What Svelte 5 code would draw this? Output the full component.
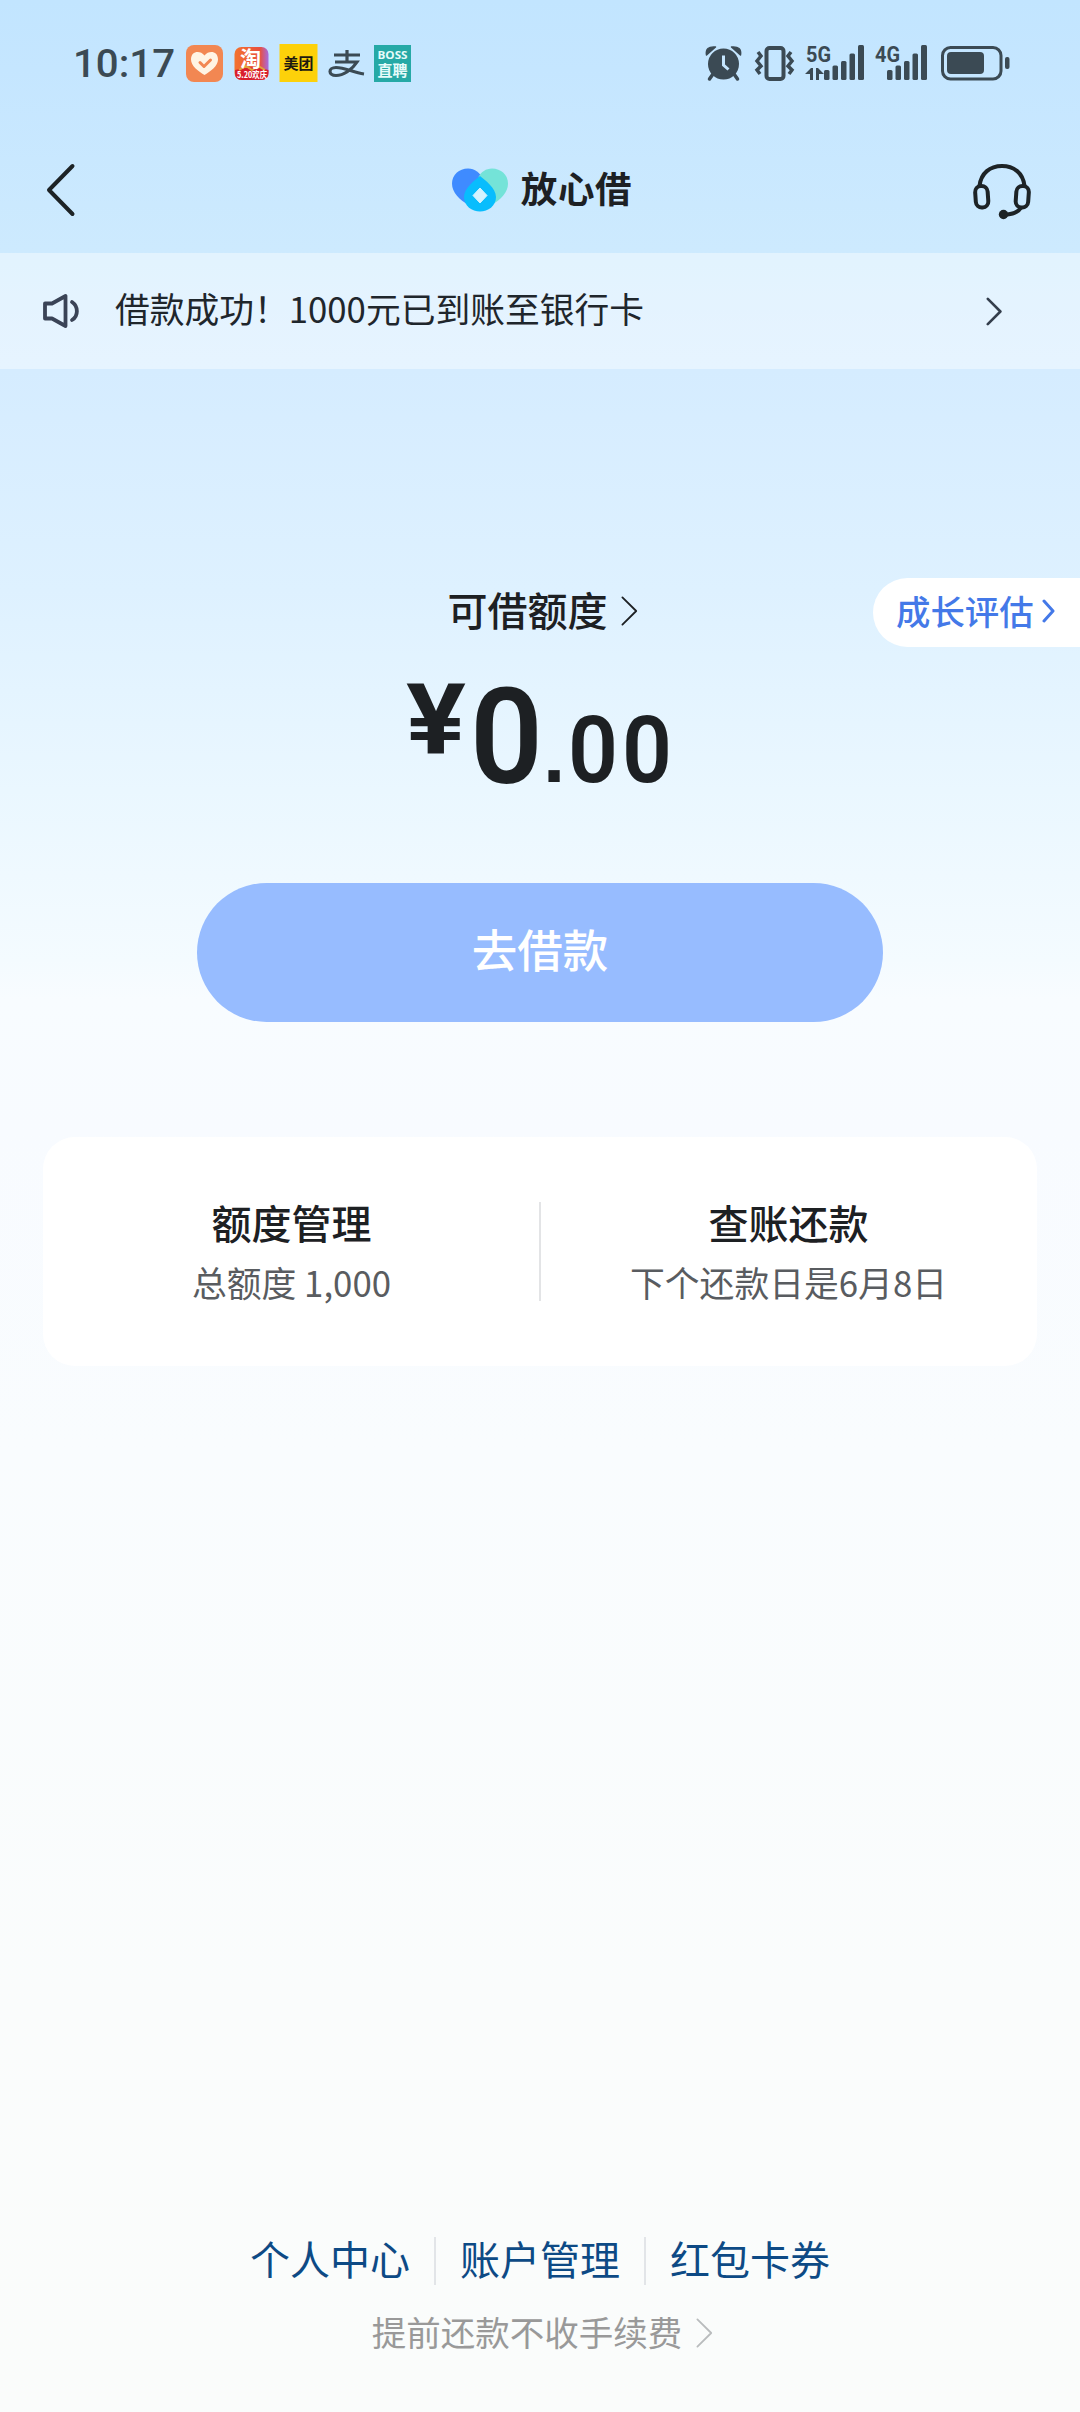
<script lang="ts">
  const links = ['个人中心', '账户管理', '红包卡券'];

  const cards = [
    { title: '额度管理', desc: '总额度 1,000' },
    { title: '查账还款', desc: '下个还款日是6月8日' },
  ];
</script>

{#snippet chevron(w: number, h: number, stroke: number)}
  <svg class="chevron" width={w} height={h} viewBox="0 0 {w} {h}" aria-hidden="true">
    <path
      d="M{stroke / 2 + 0.5} {stroke / 2 + 0.5}L{w - stroke} {h / 2}L{stroke / 2 + 0.5} {h - stroke / 2 - 0.5}"
      fill="none"
      stroke="currentColor"
      stroke-width={stroke}
      stroke-linejoin="round"
      stroke-linecap="round"
    />
  </svg>
{/snippet}

<div class="page">
  <div class="status">
    <svg width="1080" height="126" viewBox="0 0 1080 126">
      <g class="clock">
        <text x="73" y="77" textLength="102" lengthAdjust="spacingAndGlyphs">10:17</text>
      </g>

      <!-- app notifications -->
      <rect x="186" y="45" width="37" height="37" rx="8" fill="#f28752" />
      <path d="M204.500 75C198 71 191 66 191 59.500C191 51 200 50 204.500 55.500C209 50 218 51 218 59.500C218 66 211 71 204.500 75Z" fill="#fff4e4" />
      <path d="M200 62.500L204 66.500L210.500 60" fill="none" stroke="#f28752" stroke-width="3" stroke-linecap="round" stroke-linejoin="round" />

      <defs>
        <linearGradient id="tao" x1="0" y1="0" x2="1" y2="0">
          <stop offset="0" stop-color="#f3732f" />
          <stop offset="0.75" stop-color="#e8503f" />
          <stop offset="1" stop-color="#a66be0" />
        </linearGradient>
      </defs>
      <rect x="234.500" y="47" width="34" height="33" rx="7" fill="url(#tao)" />
      <path d="M235 70Q251 65 268.500 70V73Q268.500 80 261 80H242Q235 80 235 73Z" fill="#d91f2c" />
      <path d="M239 70L246 66L252 70L258 66L265 70" fill="none" stroke="#e0a23c" stroke-width="2" />
      <text class="tao" x="240" y="66">淘</text>
      <text class="sale" x="237" y="78" textLength="30" lengthAdjust="spacingAndGlyphs">5.20欢庆</text>

      <rect x="279.500" y="44" width="38" height="38" fill="#fdd10a" />
      <text class="meituan" x="283.500" y="69">美团</text>

      <g fill="none" stroke="#3b4a54" stroke-width="3.200">
        <path d="M334 55H360M347 50V62M335 62H357C352 70 343 75.500 336 75.500C328 75.500 328 67.500 336 67.500C345 67.500 353 72.500 364 74" />
      </g>

      <rect x="374" y="45" width="37" height="37" fill="#26a9a6" />
      <text class="boss" x="377.500" y="59" textLength="30" lengthAdjust="spacingAndGlyphs">BOSS</text>
      <text class="boss zh" x="377.500" y="76">直聘</text>

      <!-- alarm -->
      <g fill="#3b4a54">
        <circle cx="723.500" cy="64" r="15.500" />
        <path d="M706.500 55Q705 46 715.500 47ZM740.500 55Q742 46 731.500 47Z" stroke="#3b4a54" stroke-width="1.500" stroke-linejoin="round" />
        <path d="M713 74L709.500 79M734 74L737.500 79" stroke="#3b4a54" stroke-width="3.500" stroke-linecap="round" />
      </g>
      <path d="M723.500 55.500V65L728.500 69.500" fill="none" stroke="#c5e6ff" stroke-width="3" />

      <!-- vibrate -->
      <g fill="none" stroke="#3b4a54">
        <rect x="766.500" y="48" width="17" height="31" rx="3" stroke-width="4" />
        <path d="M758 52L761 56L757 61L761 66L757 70L760 74M791 52L788 56L792 61L788 66L792 70L789 74" stroke-width="3.500" />
      </g>

      <!-- signal -->
      <g fill="#3b4a54">
        <text class="net" x="806" y="62" textLength="25" lengthAdjust="spacingAndGlyphs">5G</text>
        <path d="M805 74L811 68H813V80H810V74ZM816 68H818L824 74H819V80H816Z" />
        <rect x="824" y="70" width="5.500" height="10" rx="1.500" />
        <rect x="832.500" y="65.500" width="5.500" height="14.500" rx="1.500" />
        <rect x="841" y="61" width="5.500" height="19" rx="1.500" />
        <rect x="849.500" y="53.500" width="5.500" height="26.500" rx="1.500" />
        <rect x="858" y="45" width="6" height="35" rx="1.500" />

        <text class="net" x="875" y="62" textLength="25" lengthAdjust="spacingAndGlyphs">4G</text>
        <rect x="887" y="70" width="5.500" height="10" rx="1.500" />
        <rect x="895.500" y="65.500" width="5.500" height="14.500" rx="1.500" />
        <rect x="904" y="61" width="5.500" height="19" rx="1.500" />
        <rect x="912.500" y="53.500" width="5.500" height="26.500" rx="1.500" />
        <rect x="921" y="45" width="6" height="35" rx="1.500" />
      </g>

      <!-- battery -->
      <rect x="942.500" y="47.500" width="58.500" height="31.500" rx="8" fill="none" stroke="#3b4a54" stroke-width="3" />
      <rect x="947" y="52" width="37" height="22" rx="4" fill="#3b4a54" />
      <rect x="1005" y="57" width="4.500" height="12" rx="2" fill="#3b4a54" />
    </svg>
  </div>

  <header class="nav">
    <svg width="32" height="56" viewBox="0 0 32 56" aria-label="返回">
      <path d="M28.500 4L5 28L28.500 52" fill="none" stroke="#1d2326" stroke-width="4" stroke-linecap="round" stroke-linejoin="round" />
    </svg>
    <div class="brand">
      <svg width="56" height="44" viewBox="0 0 56 44">
        <path d="M17 37C7 32 0 24 0 15.500C0 7 7 .5 16 .5C23 .5 28 5 31 11Z" fill="#3f8bff" />
        <path d="M39 37C49 32 56 24 56 15.500C56 7 49 .5 40 .5C34 .5 29 4 26.500 9Z" fill="#74e3d8" />
        <path d="M28 8C33 12 44 20 44 29C44 38 36 43.500 28 43.500S12 38 12 29C12 20 23 12 28 8Z" fill="#08bdfd" />
        <path d="M28 20L35 27.500L28 35L21 27.500Z" fill="#d4f3ff" stroke="#d4f3ff" stroke-linejoin="round" />
      </svg>
      <span>放心借</span>
    </div>
    <svg class="service" width="60" height="58" viewBox="0 0 60 58" aria-label="客服">
      <g fill="none" stroke="#1d2326" stroke-width="4">
        <path d="M7.500 23C9 10 18 3 30 3S51 10 52.500 23" />
        <rect x="3.500" y="23" width="12.500" height="21.500" rx="6" transform="rotate(-4 9.500 34)" />
        <rect x="44" y="23" width="12.500" height="21.500" rx="6" transform="rotate(4 50.500 34)" />
        <path d="M49.500 44C46 50 40 51 32 52" />
      </g>
      <circle cx="31.500" cy="51.500" r="4.700" fill="#1d2326" />
    </svg>
  </header>

  <div class="notice">
    <svg width="38" height="36" viewBox="0 0 38 36">
      <g fill="none" stroke="#3a4356" stroke-width="3.800" stroke-linejoin="round" stroke-linecap="round">
        <path d="M3 10.500H10L23.500 3V33L10 25.500H3Z" />
        <path d="M30 9C36.500 13.500 36.500 23 30 27" />
      </g>
    </svg>
    <span>借款成功！1000元已到账至银行卡</span>
    {@render chevron(17, 29, 2.6)}
  </div>

  <main>
    <div class="growth">成长评估{@render chevron(14, 24, 3)}</div>

    <div class="quota">可借额度{@render chevron(17, 30, 1.8)}</div>

    <svg class="amount" width="280" height="165" viewBox="400 655 280 165">
      <text class="sign" x="406" y="754" textLength="60" lengthAdjust="spacingAndGlyphs">¥</text>
      <text class="int" x="470" y="783" textLength="73" lengthAdjust="spacingAndGlyphs">0</text>
      <text class="dot" x="543" y="782">.</text>
      <g class="frac">
        <text x="568" y="782" textLength="50" lengthAdjust="spacingAndGlyphs">0</text>
        <text x="622" y="782" textLength="50" lengthAdjust="spacingAndGlyphs">0</text>
      </g>
    </svg>

    <button class="borrow">去借款</button>

    <section class="cards">
      {#each cards as card}
        <div class="card">
          <strong>{card.title}</strong>
          <span>{card.desc}</span>
        </div>
      {/each}
    </section>
  </main>

  <footer>
    <nav class="links">
      {#each links as link}
        <span>{link}</span>
      {/each}
    </nav>
    <div class="tip">
      <span>提前还款不收手续费</span>
      {@render chevron(17, 30, 1.8)}
    </div>
  </footer>
</div>

<style>
  :global(body) {
    margin: 0;
  }
  .page {
    display: flex;
    flex-direction: column;
    width: 1080px;
    height: 2412px;
    overflow: hidden;
    font-family: 'Noto Sans CJK SC', sans-serif;
    color: #1d2023;
    background: linear-gradient(
      #c2e5ff 0,
      #c5e6ff 70px,
      #cdeafe 250px,
      #d5ecff 370px,
      #def1ff 590px,
      #eaf7ff 790px,
      #f4fbff 960px,
      #f8fcff 1000px,
      #f8fbff 1130px,
      #f9fcfe 1450px,
      #fafcfc 2000px,
      #fafcfb 2412px
    );
  }
  .chevron {
    flex: none;
  }

  .status {
    height: 126px;
  }
  .clock text {
    font: 500 39px Roboto, sans-serif;
    fill: #3b4a54;
  }
  .net {
    font: 700 22.5px Roboto, sans-serif;
  }
  .tao {
    font-size: 21px;
    font-weight: 700;
    fill: #fff;
  }
  .sale {
    font-size: 9px;
    font-weight: 700;
    fill: #fff;
  }
  .meituan {
    font-size: 15px;
    font-weight: 700;
    fill: #1d1a10;
  }
  .boss {
    font: 700 11px 'Open Sans', sans-serif;
    fill: #e6fbfa;
  }
  .boss.zh {
    font: 700 15px 'Noto Sans CJK SC', sans-serif;
  }

  .nav {
    display: flex;
    align-items: center;
    justify-content: space-between;
    height: 127px;
    box-sizing: border-box;
    padding: 0 48px 0 44px;
  }
  .brand {
    display: flex;
    align-items: center;
    gap: 13px;
    margin-left: 36px;
    font-size: 36.5px;
    font-weight: 700;
    letter-spacing: 0.7px;
    line-height: 44px;
  }
  .brand span {
    padding-bottom: 3px;
  }
  .service {
    margin-top: 4px;
  }

  .notice {
    display: flex;
    align-items: center;
    height: 116px;
    box-sizing: border-box;
    padding: 0 77px 0 42px;
    background: rgba(255, 255, 255, 0.42);
    font-size: 34.75px;
    color: #1f262c;
  }
  .notice span {
    flex: 1;
    margin-left: 35px;
    padding-bottom: 6px;
  }
  .notice .chevron {
    color: #343e4c;
  }

  main {
    position: relative;
    display: flex;
    flex-direction: column;
    align-items: center;
  }
  .growth {
    position: absolute;
    top: 209px;
    right: 0;
    display: flex;
    align-items: center;
    gap: 8px;
    width: 207px;
    height: 69px;
    box-sizing: border-box;
    padding: 0 0 6px 23px;
    border-radius: 35px 0 0 35px;
    background: #fff;
    color: #4479e8;
    font-size: 34.4px;
    font-weight: 500;
    line-height: 62px;
  }
  .growth .chevron {
    margin-top: 3px;
  }
  .quota {
    display: flex;
    align-items: center;
    gap: 13px;
    margin: 210px 0 0 5px;
    height: 60px;
    font-size: 40px;
    font-weight: 500;
    line-height: 60px;
  }
  .quota .chevron {
    margin-top: 4px;
  }
  .amount {
    margin-top: 16px;
  }
  .amount text {
    font-family: Roboto, sans-serif;
    fill: #1d2023;
  }
  .amount .sign {
    font-size: 98px;
    font-weight: 700;
  }
  .amount .int {
    font-size: 134px;
    font-weight: 600;
  }
  .amount .dot {
    font-family: 'Liberation Sans', sans-serif;
    font-size: 80px;
    font-weight: 700;
  }
  .frac text {
    font-size: 93px;
    font-weight: 600;
  }
  .borrow {
    width: 686px;
    height: 139px;
    margin-top: 63px;
    padding: 0 0 9px;
    border: none;
    border-radius: 70px;
    background: #97bcff;
    color: #fff;
    font: 500 45.5px 'Noto Sans CJK SC', sans-serif;
  }
  .cards {
    display: flex;
    width: 994px;
    height: 229px;
    margin-top: 115px;
    border-radius: 32px;
    background: #fff;
  }
  .card {
    flex: 1;
    display: flex;
    flex-direction: column;
    align-items: center;
    padding-top: 55px;
    position: relative;
  }
  .card + .card::before {
    content: '';
    position: absolute;
    left: -1px;
    top: 65px;
    width: 2px;
    height: 99px;
    background: #e3e4e6;
  }
  .card strong {
    font-size: 40px;
    font-weight: 500;
    line-height: 60px;
  }
  .card span {
    font-size: 34.8px;
    line-height: 60px;
    color: #595c60;
  }

  footer {
    margin-top: auto;
    padding-bottom: 51px;
  }
  .links {
    display: flex;
    justify-content: center;
    color: #0d4a85;
    font-size: 40px;
    line-height: 42px;
  }
  .links span {
    padding: 0 24px 6px;
  }
  .links span + span {
    border-left: 2px solid #e2e5e8;
  }
  .tip {
    display: flex;
    align-items: center;
    justify-content: center;
    gap: 14px;
    margin: 20px 0 0 5px;
    height: 56px;
    font-size: 34.5px;
    line-height: 52px;
    color: #999;
  }
  .tip span {
    padding-bottom: 4px;
  }
  .tip .chevron {
    color: #b9bcbd;
  }
</style>
